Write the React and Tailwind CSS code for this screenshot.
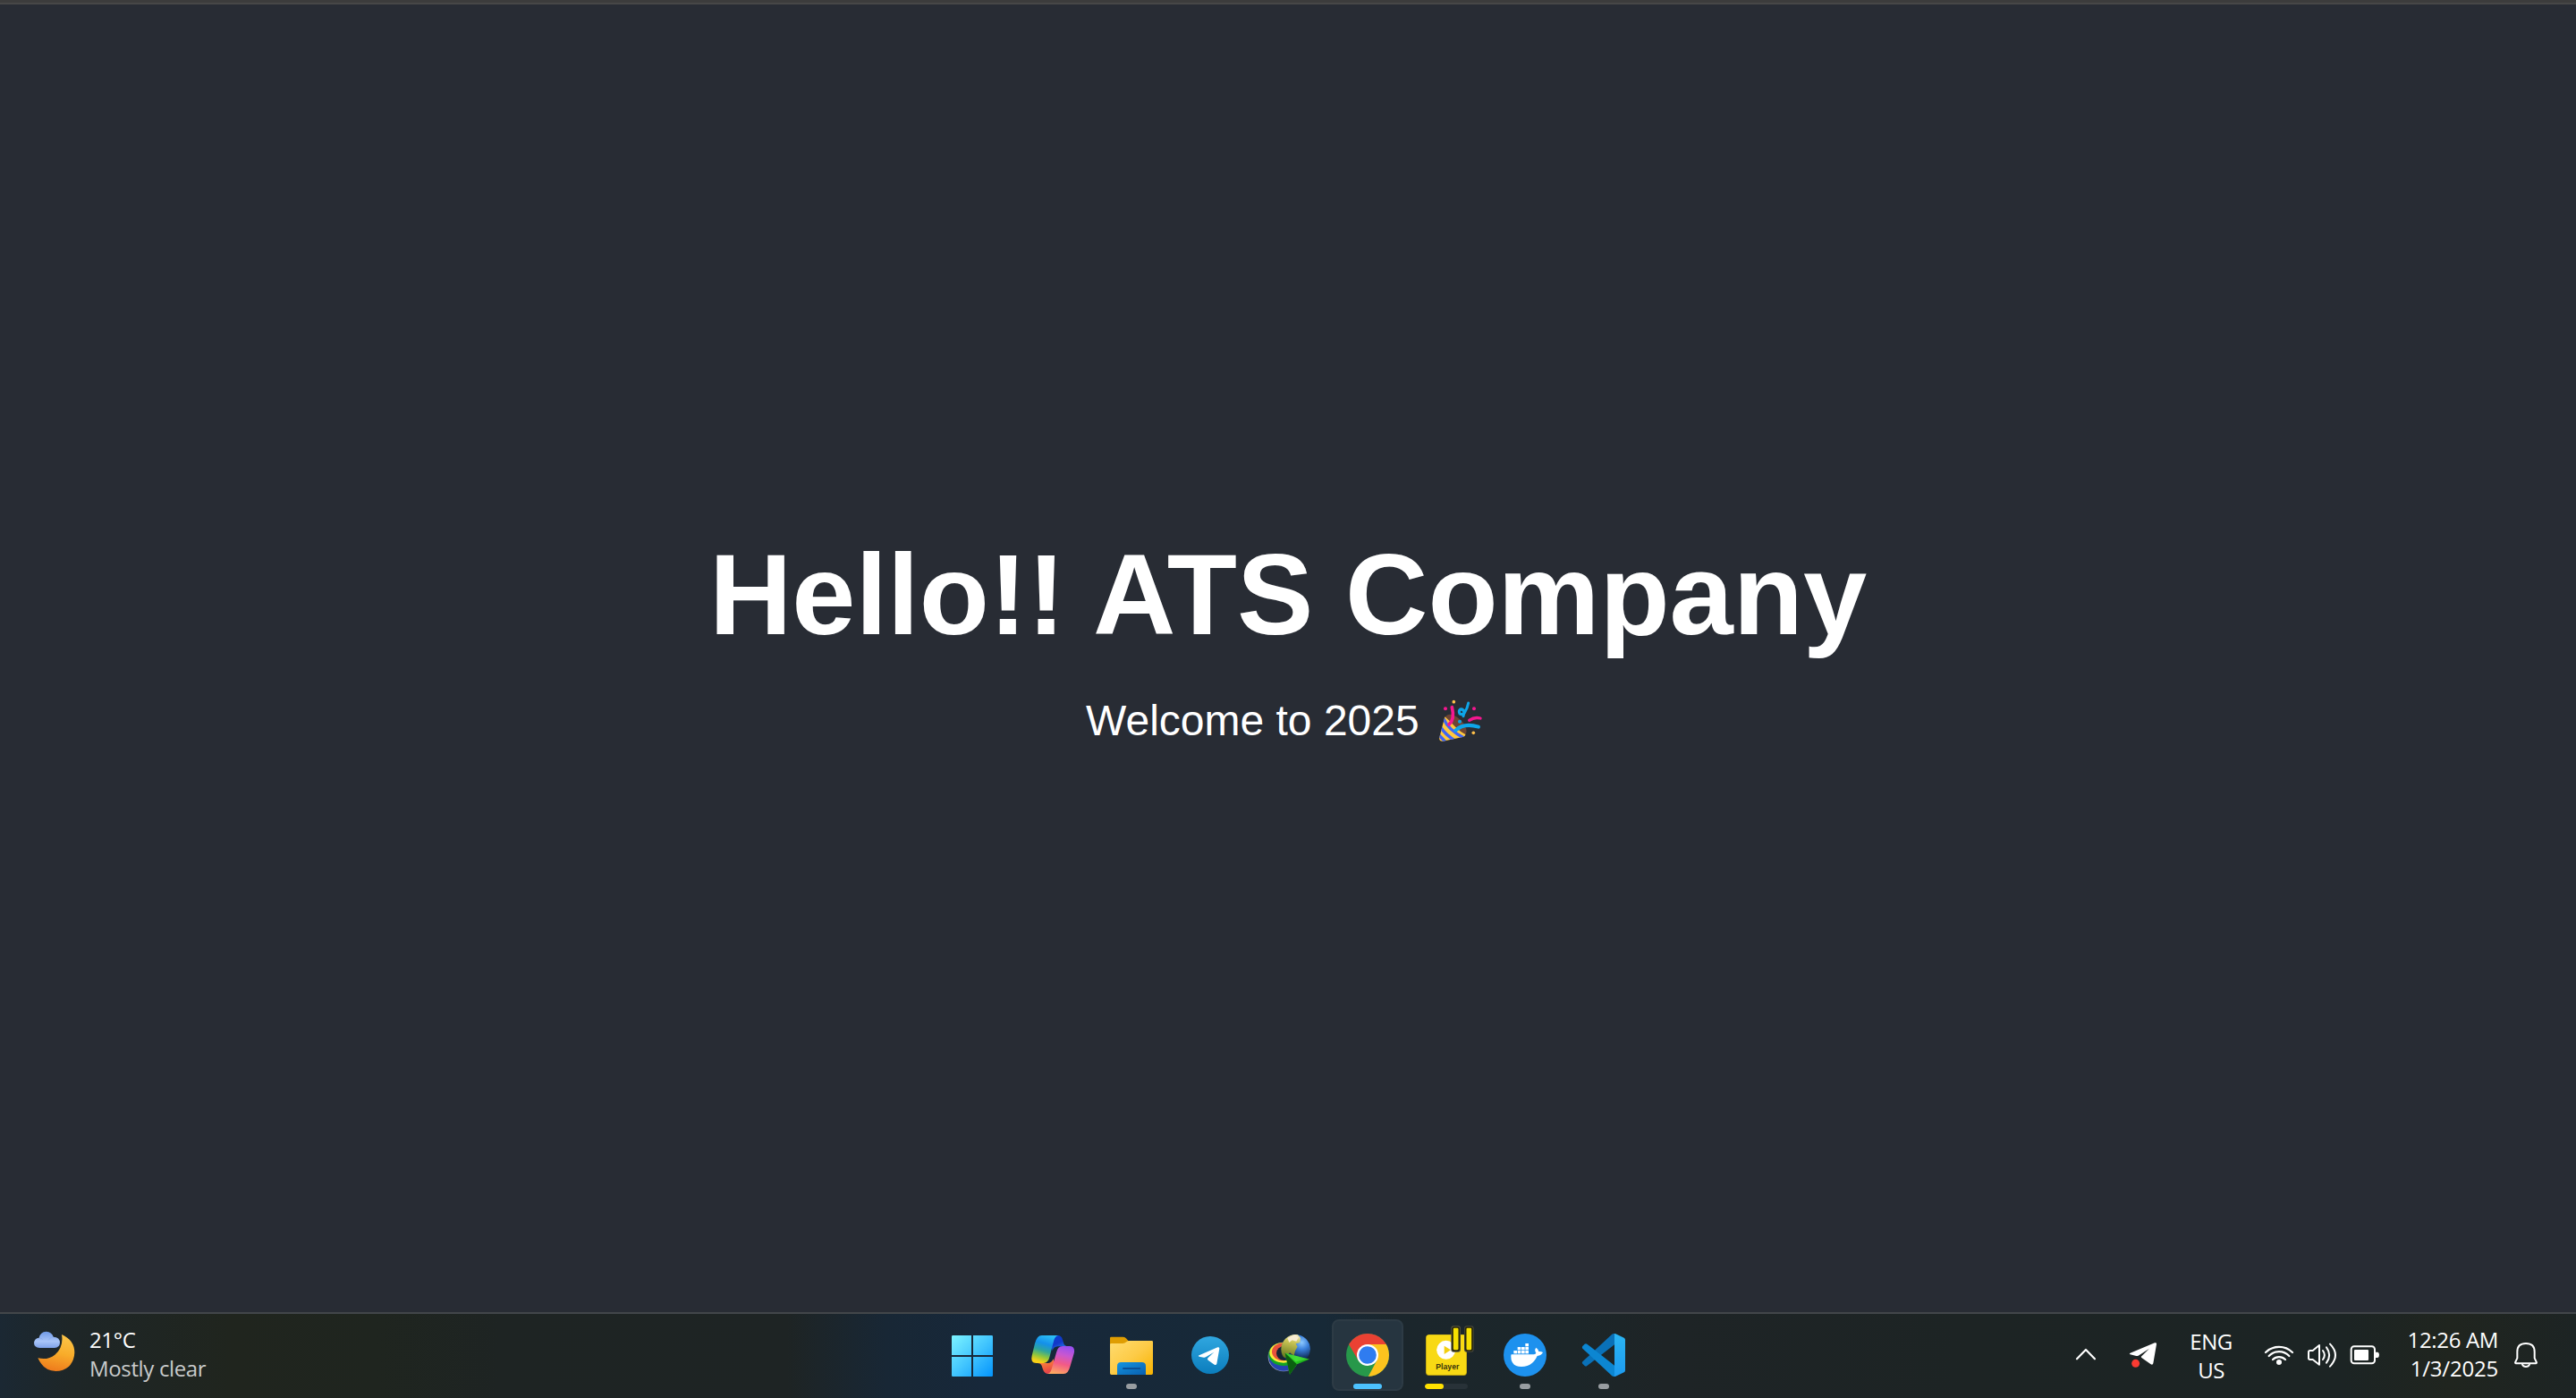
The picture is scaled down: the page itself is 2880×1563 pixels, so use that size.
const BAR_BG =
  "bg-[linear-gradient(90deg,#1b2833_0px,#1e2627_80px,#20251e_260px,#1f251f_420px,#1e2423_560px,#1e2424_880px,#182735_990px,#17283a_1100px,#172937_1480px,#1b262c_1560px,#1c2629_1760px,#1e2426_1860px,#1d2424_2200px,#1c2424_2620px,#20251f_2740px,#1d2424_2880px)]";

function StartIcon() {
  return (
    <svg className="size-20" viewBox="27 60 240 240">
      <defs>
        <linearGradient id="win" gradientUnits="userSpaceOnUse" x1="72" y1="114" x2="210" y2="252">
          <stop offset="0" stopColor="#7df4ff" />
          <stop offset="0.5" stopColor="#43c6fe" />
          <stop offset="1" stopColor="#0494fc" />
        </linearGradient>
      </defs>
      <g fill="url(#win)">
        <path d="M76 114H138V180H72V118Q72 114 76 114Z" />
        <path d="M144 114H206Q210 114 210 118V180H144Z" />
        <path d="M72 186H138V252H76Q72 252 72 248Z" />
        <path d="M144 186H210V248Q210 252 206 252H144Z" />
      </g>
    </svg>
  );
}

function CopilotIcon() {
  return (
    <svg className="size-20" viewBox="291 60 240 240">
      <defs>
        <linearGradient id="cpA" x1="0.6" y1="0" x2="0.3" y2="1">
          <stop offset="0" stopColor="#2bbcf4" />
          <stop offset="0.3" stopColor="#1490ea" />
          <stop offset="0.55" stopColor="#2ea59c" />
          <stop offset="0.76" stopColor="#8fc63d" />
          <stop offset="0.95" stopColor="#f8d016" />
        </linearGradient>
        <linearGradient id="cpB" x1="0.2" y1="0" x2="0.8" y2="1">
          <stop offset="0" stopColor="#0a3fd0" />
          <stop offset="0.5" stopColor="#1238c8" />
          <stop offset="1" stopColor="#2b8cf0" />
        </linearGradient>
        <linearGradient id="cpC" x1="0.6" y1="0" x2="0.35" y2="1">
          <stop offset="0" stopColor="#9a50f0" />
          <stop offset="0.3" stopColor="#c957cf" />
          <stop offset="0.62" stopColor="#f35a86" />
          <stop offset="1" stopColor="#fda860" />
        </linearGradient>
        <linearGradient id="cpD" x1="0.2" y1="0" x2="0.6" y2="1">
          <stop offset="0" stopColor="#ff9440" />
          <stop offset="0.6" stopColor="#f0603e" />
          <stop offset="1" stopColor="#e03a50" />
        </linearGradient>
      </defs>
      <path fill="url(#cpB)" d="M396 114H428Q440 114 444 128L448 142Q451 150 462 151H428Q414 152 410 165L408 156Z" />
      <path fill="url(#cpD)" d="M424 243H396Q383 243 378 228L374 216Q371 207 360 207H396Q408 206 413 192L415 204Z" />
      <path fill="url(#cpA)" d="M374 114H430Q419 116 415 130L401 184Q396 207 380 207H356Q335 207 341 182L351 141Q358 114 374 114Z" />
      <path fill="url(#cpC)" d="M448 243H392Q403 241 407 227L423 172Q428 150 444 150H466Q488 150 482 175L470 216Q463 243 448 243Z" />
    </svg>
  );
}

function FolderIcon() {
  return (
    <svg className="size-20" viewBox="555 60 240 240">
      <defs>
        <linearGradient id="fo" x1="0" y1="0" x2="1" y2="1">
          <stop offset="0" stopColor="#ffdc70" />
          <stop offset="0.5" stopColor="#fdcb47" />
          <stop offset="1" stopColor="#f8b300" />
        </linearGradient>
        <linearGradient id="fb" x1="0" y1="0" x2="1" y2="1">
          <stop offset="0" stopColor="#1494e0" />
          <stop offset="1" stopColor="#0960b0" />
        </linearGradient>
      </defs>
      <path fill="#df9d02" d="M603 123Q603 119 607 119H646Q652 119 656 123L670 138V160H603Z" />
      <path fill="url(#fo)" d="M603 145Q603 141 607 141H646Q653 141 658 136Q662 132 668 132H743Q747 132 747 136V241Q747 246 742 246H608Q603 246 603 241Z" />
      <path fill="url(#fb)" d="M627 246V217Q627 204 640 204H710Q723 204 723 217V246Z" />
      <path stroke="#0a4f96" strokeWidth="5.5" strokeLinecap="round" d="M648 225H703" />
    </svg>
  );
}

function TelegramIcon() {
  return (
    <svg className="size-20" viewBox="39 60 240 240">
      <defs>
        <linearGradient id="tg" x1="0" y1="0" x2="0" y2="1">
          <stop offset="0" stopColor="#30a7e0" />
          <stop offset="1" stopColor="#0b7dbd" />
        </linearGradient>
      </defs>
      <circle cx="159" cy="180" r="63" fill="url(#tg)" />
      <path fill="#fff" d="M122 181L184 154Q190 152 190 158L181 209Q179 215 173 212L152 197Q148 193 152 189L172 170L144 187Q141 189 137 188L122 185Q117 183 122 181Z" />
    </svg>
  );
}

function IdmIcon() {
  return (
    <svg className="size-20" viewBox="303 60 240 240">
      <defs>
        <radialGradient id="gl" gradientUnits="userSpaceOnUse" cx="466" cy="138" r="52">
          <stop offset="0" stopColor="#8cc8ff" />
          <stop offset="0.45" stopColor="#3a80dc" />
          <stop offset="1" stopColor="#12305f" />
        </radialGradient>
        <linearGradient id="land" x1="0.6" y1="0" x2="0.4" y2="1">
          <stop offset="0" stopColor="#f5ecc0" />
          <stop offset="0.35" stopColor="#c9c455" />
          <stop offset="1" stopColor="#64781e" />
        </linearGradient>
        <linearGradient id="arr" x1="0" y1="0" x2="1" y2="0.4">
          <stop offset="0" stopColor="#19a018" />
          <stop offset="0.5" stopColor="#29d022" />
          <stop offset="1" stopColor="#0c8c0e" />
        </linearGradient>
        <clipPath id="gc">
          <circle cx="446" cy="160" r="49" />
        </clipPath>
      </defs>
      <ellipse cx="405" cy="186" rx="52" ry="49" fill="#9aa4b8" />
      <ellipse cx="405" cy="185" rx="50" ry="48" fill="#2543b0" />
      <ellipse cx="405" cy="177" rx="50" ry="39" fill="#12a524" />
      <ellipse cx="405" cy="172" rx="47" ry="34" fill="#fbea3a" />
      <ellipse cx="404" cy="169" rx="38" ry="30" fill="#e8523c" />
      <ellipse cx="408" cy="174" rx="27" ry="24" fill="#182433" />
      <g clipPath="url(#gc)">
        <circle cx="446" cy="160" r="49" fill="url(#gl)" />
        <path fill="url(#land)" d="M390 106H448L462 122L460 138L446 142L452 152L444 166L440 182L426 172L412 190L394 182Z" />
        <path fill="#f7ecd2" d="M418 122L442 112L456 120L448 134L434 130L424 138Z" />
      </g>
      <path fill="url(#arr)" d="M410 173L492 194L450 211L426 245Z" />
      <path fill="#0b5f10" d="M410 173L450 211L426 245Z" />
      <path fill="#5bf04c" d="M410 173L492 194L446 202Z" opacity="0.5" />
    </svg>
  );
}

function ChromeIcon() {
  return (
    <svg className="size-20" viewBox="567 60 240 240">
      <defs>
        <clipPath id="cc">
          <circle cx="687" cy="180" r="72" />
        </clipPath>
      </defs>
      <g clipPath="url(#cc)">
        <rect x="615" y="108" width="144" height="144" fill="#27984a" />
        <path fill="#fcc31e" d="M687 144H770V260H685L718 198Z" />
        <path fill="#ea4133" d="M624 144L600 100H780V144H687L656 198Z" />
      </g>
      <circle cx="687" cy="180" r="36" fill="#fff" />
      <circle cx="687" cy="180" r="29.5" fill="#2f7cf0" />
    </svg>
  );
}

function PlayerIcon() {
  return (
    <svg className="size-20" viewBox="51 60 240 240">
      <rect x="102" y="112" width="138" height="137" rx="11" fill="#b39b13" />
      <rect x="104" y="112" width="134" height="134" rx="10" fill="#f8d914" />
      <circle cx="170" cy="163" r="31.5" fill="#fff" />
      <path fill="#f3cf10" d="M164 149L186 163L164 177Z" />
      <text x="175" y="227" textAnchor="middle" textLength="78" lengthAdjust="spacingAndGlyphs" fontFamily="Liberation Sans, sans-serif" fontWeight="700" fontSize="28" fill="#3a340c">
        Player
      </text>
      <g strokeLinejoin="round">
        <rect x="187" y="82" width="32" height="88" rx="9" fill="#55543e" />
        <rect x="231" y="82" width="32" height="88" rx="9" fill="#45473d" />
        <rect x="192" y="87" width="22" height="78" rx="6" fill="#f6e000" stroke="#28260c" strokeWidth="5" />
        <rect x="236" y="87" width="22" height="78" rx="6" fill="#f6e000" stroke="#28260c" strokeWidth="5" />
      </g>
    </svg>
  );
}

function DockerIcon() {
  return (
    <svg className="size-20" viewBox="315 60 240 240">
      <circle cx="435" cy="180" r="72" fill="#1d91ee" />
      <g fill="#fff">
        <rect x="397" y="165" width="11" height="10" />
        <rect x="410" y="165" width="11" height="10" />
        <rect x="423" y="165" width="11" height="10" />
        <rect x="436" y="165" width="11" height="10" />
        <rect x="410" y="153" width="11" height="10" />
        <rect x="423" y="153" width="11" height="10" />
        <rect x="436" y="153" width="11" height="10" />
        <rect x="436" y="141" width="11" height="10" />
        <path d="M390 178H459Q470 178 472 173Q465 163 472 155Q480 160 481 168Q489 167 495 171Q490 182 476 183Q460 219 423 219Q386 219 388 181Q388 178 390 178Z" />
      </g>
    </svg>
  );
}

function VsCodeIcon() {
  return (
    <svg className="size-20" viewBox="579 60 240 240">
      <defs>
        <linearGradient id="vs" x1="0" y1="0" x2="0" y2="1">
          <stop offset="0" stopColor="#2bb5f3" />
          <stop offset="1" stopColor="#1d9bf0" />
        </linearGradient>
      </defs>
      <path fill="#0a71b8" d="M735 108V145L643 216Q639 219 635 216L628 209Q625 206 628 202L726 111Q730 107 735 108Z" />
      <path fill="#0c86d2" d="M735 252V215L643 143Q639 140 635 143L628 150Q625 154 628 158L726 249Q730 253 735 252Z" />
      <path fill="url(#vs)" d="M735 108Q737 108 739 109L767 122Q771 124 771 129V231Q771 236 767 238L739 251Q737 252 735 252Z" />
    </svg>
  );
}

const APPS = [
  { name: "Start", Icon: StartIcon },
  { name: "Copilot", Icon: CopilotIcon },
  { name: "File Explorer", Icon: FolderIcon, state: "open" },
  { name: "Telegram", Icon: TelegramIcon },
  { name: "Download Manager", Icon: IdmIcon },
  { name: "Chrome", Icon: ChromeIcon, state: "active" },
  { name: "Player", Icon: PlayerIcon, state: "progress" },
  { name: "Docker", Icon: DockerIcon, state: "open" },
  { name: "VS Code", Icon: VsCodeIcon, state: "open" },
];

function Indicator({ state }) {
  if (state === "open") return <span className="absolute bottom-[2px] left-[34px] h-[6px] w-3 rounded-full bg-[#989da1]" />;
  if (state === "active") return <span className="absolute bottom-0 left-[22px] h-[6px] w-8 rounded-full bg-[#4cc2ff]" />;
  if (state === "progress")
    return (
      <span className="absolute bottom-[2px] left-4 flex h-[6px] w-12 overflow-hidden rounded-full bg-[#283238]">
        <span className="w-[21px] rounded-full bg-[#ffe100]" />
      </span>
    );
  return null;
}

function AppButton({ name, Icon, state }) {
  const active = state === "active";
  return (
    <button
      aria-label={name}
      className={
        active
          ? "relative mx-1 flex size-20 items-center justify-center rounded-lg border-2 border-[#2d3b45] bg-[#263540]"
          : "relative mx-1 flex size-20 items-center justify-center"
      }
    >
      <span className="size-20 shrink-0">
        <Icon />
      </span>
      <Indicator state={state} />
    </button>
  );
}

function MoonCloud() {
  return (
    <svg className="ml-9 h-[94px] w-12 shrink-0" viewBox="108 42 144 282">
      <defs>
        <linearGradient id="mo" x1="0.6" y1="0" x2="0.4" y2="1">
          <stop offset="0" stopColor="#fcc548" />
          <stop offset="0.5" stopColor="#f8ac2a" />
          <stop offset="1" stopColor="#ee7a1c" />
        </linearGradient>
        <linearGradient id="cl" x1="0" y1="0" x2="0" y2="1">
          <stop offset="0" stopColor="#6f9ae8" />
          <stop offset="0.6" stopColor="#a9c5f8" />
          <stop offset="1" stopColor="#7ea2ea" />
        </linearGradient>
      </defs>
      <path fill="url(#mo)" d="M207 111Q250 130 250 172Q249 200 231 218Q212 234 187 234Q146 233 127 190Q160 198 184 179Q214 154 207 111Z" />
      <path fill="url(#cl)" d="M133 156Q114 155 114 139Q115 124 131 122Q135 102 155 101Q174 102 179 119Q201 120 201 139Q200 155 183 156Z" />
      <path fill="none" stroke="#7d9fe6" strokeWidth="2" opacity="0.7" d="M131 123Q139 122 143 128M179 119Q167 120 163 130" />
    </svg>
  );
}

function PartyPopper() {
  return (
    <svg className="-mt-[3px] h-[60px] w-[66px]" viewBox="0 0 198 180" fill="none" strokeLinecap="round">
      <defs>
        <clipPath id="cone">
          <path d="M46 79Q62 92 80 112Q98 130 116 139Q114 145 106 147L40 161Q25 162 28 148Z" />
        </clipPath>
      </defs>
      <ellipse cx="82" cy="108" rx="45" ry="25" transform="rotate(45 82 108)" fill="#6d4534" />
      <g clipPath="url(#cone)">
        <rect x="20" y="70" width="110" height="100" fill="#ffc83d" />
        <g stroke="#3f64f5" strokeWidth="10" strokeLinecap="butt">
          <path d="M42 86Q58 124 110 150" />
          <path d="M32 114Q50 142 82 160" />
          <path d="M24 138Q38 152 52 168" />
        </g>
      </g>
      <path stroke="#f5178f" strokeWidth="11" d="M70 47Q80 88 60 105" />
      <path stroke="#f5178f" strokeWidth="10" d="M128 91Q145 79 165 84" />
      <path stroke="#0ea5e9" strokeWidth="12" d="M82 125Q110 98 159 113" />
      <path stroke="#0ea5e9" strokeWidth="9" strokeLinejoin="round" d="M125 33Q122 50 112 66Q104 74 96 69Q91 60 98 54Q107 52 110 62Q112 70 108 77" />
      <circle cx="96" cy="95" r="6" fill="#0ea5e9" />
      <circle cx="48" cy="52" r="6" fill="#f5178f" />
      <circle cx="144" cy="52" r="6" fill="#f5178f" />
      <circle cx="76" cy="29" r="5.5" fill="#ffc04a" />
      <circle cx="142" cy="133" r="5.5" fill="#ffc04a" />
    </svg>
  );
}

function Tray() {
  return (
    <div className="ml-auto flex items-start text-white">
      <svg className="h-[94px] w-6" viewBox="60 42 72 282" fill="none" stroke="#fff" strokeWidth="6.5" strokeLinecap="round" strokeLinejoin="round">
        <path d="M66 193L96 162L126 193" />
      </svg>
      <svg className="ml-9 h-[94px] w-8" viewBox="240 42 96 282">
        <path fill="#fff" d="M245 173L327 139Q334 137 333 144L322 208Q320 215 314 211L283 189Q280 186 283 184L309 158L272 182Q269 184 265 183L245 178Q240 176 245 173Z" />
        <circle cx="263" cy="208" r="13.5" fill="#fa3b32" />
      </svg>
      <div className="ml-[30px] mt-[15px] w-[60px] text-center text-[24px] leading-8 tracking-[-0.5px]">
        ENG
        <br />
        US
      </div>
      <svg className="ml-[29px] h-[94px] w-[34px]" viewBox="15 -63 102 282" fill="none" stroke="#fff" strokeWidth="6.5" strokeLinecap="round">
        <path d="M21 66A64 64 0 0 1 111 66M32 78A47 47 0 0 1 100 78M45 90A30 30 0 0 1 87 90" />
        <circle cx="66" cy="99" r="9" fill="#fff" stroke="none" />
      </svg>
      <svg className="ml-[14px] h-[94px] w-[35px]" viewBox="159 -63 105 282" fill="none" stroke="#fff" strokeWidth="6" strokeLinecap="round" strokeLinejoin="round">
        <path d="M165 65Q165 60 170 60H179L201 42V107L179 90H170Q165 90 165 85Z" />
        <path d="M213 60Q224 75 213 90M225 49Q244 75 225 101M237 38Q273 75 237 113" />
      </svg>
      <svg className="ml-[13px] h-[94px] w-[34px]" viewBox="303 -63 102 282">
        <rect x="308" y="46" width="79" height="57" rx="10" fill="none" stroke="#fff" strokeWidth="6" />
        <rect x="318" y="57" width="48" height="36" rx="3" fill="#fff" />
        <path fill="#fff" d="M389 65H397Q402 67 402 74Q402 82 397 84H389Z" />
      </svg>
      <div className="mt-[13px] w-[132px] whitespace-nowrap text-right text-[24px] leading-8 tracking-[-0.35px]">
        12:26 AM
        <br />
        <span className="tracking-[-0.2px]">1/3/2025</span>
      </div>
      <svg className="ml-[17px] mr-[42px] h-[94px] w-7" viewBox="660 42 84 282" fill="none" stroke="#fff" strokeWidth="6" strokeLinejoin="round" strokeLinecap="round">
        <path d="M673 190V169Q673 141 702 141Q731 141 731 169V190L738 205Q738 208 735 208H669Q666 208 666 205Z" />
        <path d="M690 212Q693 219 702 219Q711 219 714 212" />
      </svg>
    </div>
  );
}

export default function App() {
  return (
    <div className="flex h-[1563px] w-[2880px] flex-col overflow-hidden bg-[#282c34]">
      <header className="h-[5px] shrink-0 border-b-2 border-[#474747] bg-[#3c3c3c]" />
      <main className="flex flex-1 flex-col items-center pt-[588px] font-['Liberation_Sans',Arial,sans-serif] text-white">
        <h1 className="text-[128px] font-bold leading-[144px]">Hello!! ATS Company</h1>
        <p className="mt-[41px] flex h-14 items-start whitespace-pre text-[48px] leading-[56px]">
          <span>{"Welcome to 2025 "}</span>
          <PartyPopper />
        </p>
      </main>
      <div className="h-0.5 shrink-0 bg-[#42464a]" />
      <footer className={`flex h-[94px] shrink-0 items-start font-['Open_Sans','Noto_Sans',sans-serif] ${BAR_BG}`}>
        <div className="flex w-[1045px] items-start">
          <MoonCloud />
          <div className="ml-4 mt-[13px] whitespace-nowrap text-[24px] leading-8 tracking-[-0.35px] text-white">
            21°C
            <br />
            <span className="text-[#c9cbcb]">Mostly clear</span>
          </div>
        </div>
        <nav className="mt-[6px] flex">
          {APPS.map((app) => (
            <AppButton key={app.name} {...app} />
          ))}
        </nav>
        <Tray />
      </footer>
    </div>
  );
}
